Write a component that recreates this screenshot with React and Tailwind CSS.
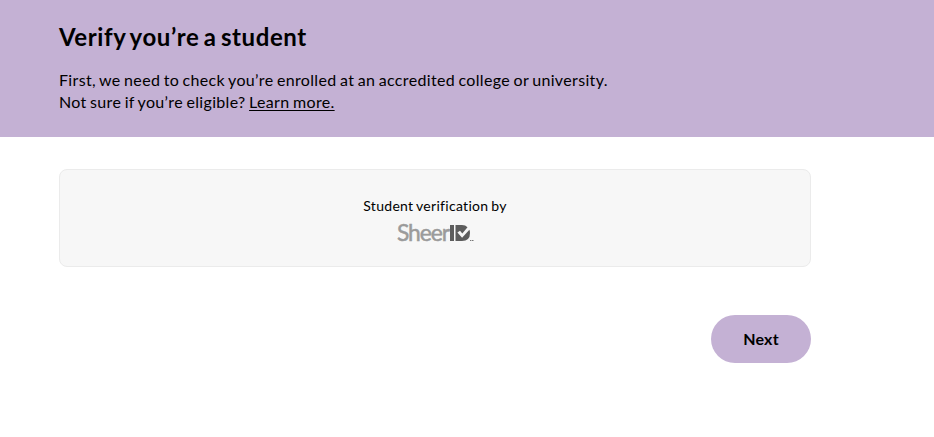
function SheerLogo() {
  return (
    <svg width="78" height="22" viewBox="0 0 78 22" className="block overflow-visible" role="img" aria-label="SheerID">
      <text x="1" y="18" fontSize="23" fontFamily="Lato, sans-serif" letterSpacing="-1.1" fill="#9b9b9b" stroke="#9b9b9b" strokeWidth="0.5" textLength="52" lengthAdjust="spacingAndGlyphs">Sheer</text>
      <path d="M54 2h4v16h-4zM59.5 2h6.500q3.500 0 5.500 2.200l-5.200 6.300-2.300-2.800-2.600 1.800 4.700 5.300 7.300-8q.6 1.500.6 3.200 0 8-8 8h-6.500z" fill="#5d5d5d" />
      <path d="M74 17.500h1.400M76 17.500h1.500" stroke="#777" strokeWidth="1.200" />
    </svg>
  );
}

export default function App() {
  return (
    <div className="min-h-[437px] bg-white font-['Lato',sans-serif] text-black">
      <header className="h-[137px] bg-[#c4b1d4] pl-[59px] pt-[21px]">
        <h1 className="text-2xl leading-8 font-bold tracking-[0.58px] [word-spacing:-2px]">Verify you’re a student</h1>
        <p className="mt-4 text-base leading-[22px] tracking-[0.34px] whitespace-nowrap [word-spacing:-1px]">
          First, we need to check you’re enrolled at an accredited college or university.
          <br />
          Not sure if you’re eligible? <a href="#" className="underline decoration-1 underline-offset-2">Learn more.</a>
        </p>
      </header>
      <main className="ml-[59px] flex w-[752px] flex-col pt-8">
        <section className="flex h-[98px] flex-col items-center rounded-lg border border-[#ebebeb] bg-[#f7f7f7] pt-[26px]">
          <p className="text-sm leading-5 tracking-[0.3px] whitespace-nowrap [word-spacing:-1px]">Student verification by</p>
          <div className="mt-[7px]"><SheerLogo /></div>
        </section>
        <button className="mt-12 h-12 w-[100px] self-end rounded-full bg-[#c4b1d4] text-base font-bold tracking-[0.2px]">Next</button>
      </main>
    </div>
  );
}
